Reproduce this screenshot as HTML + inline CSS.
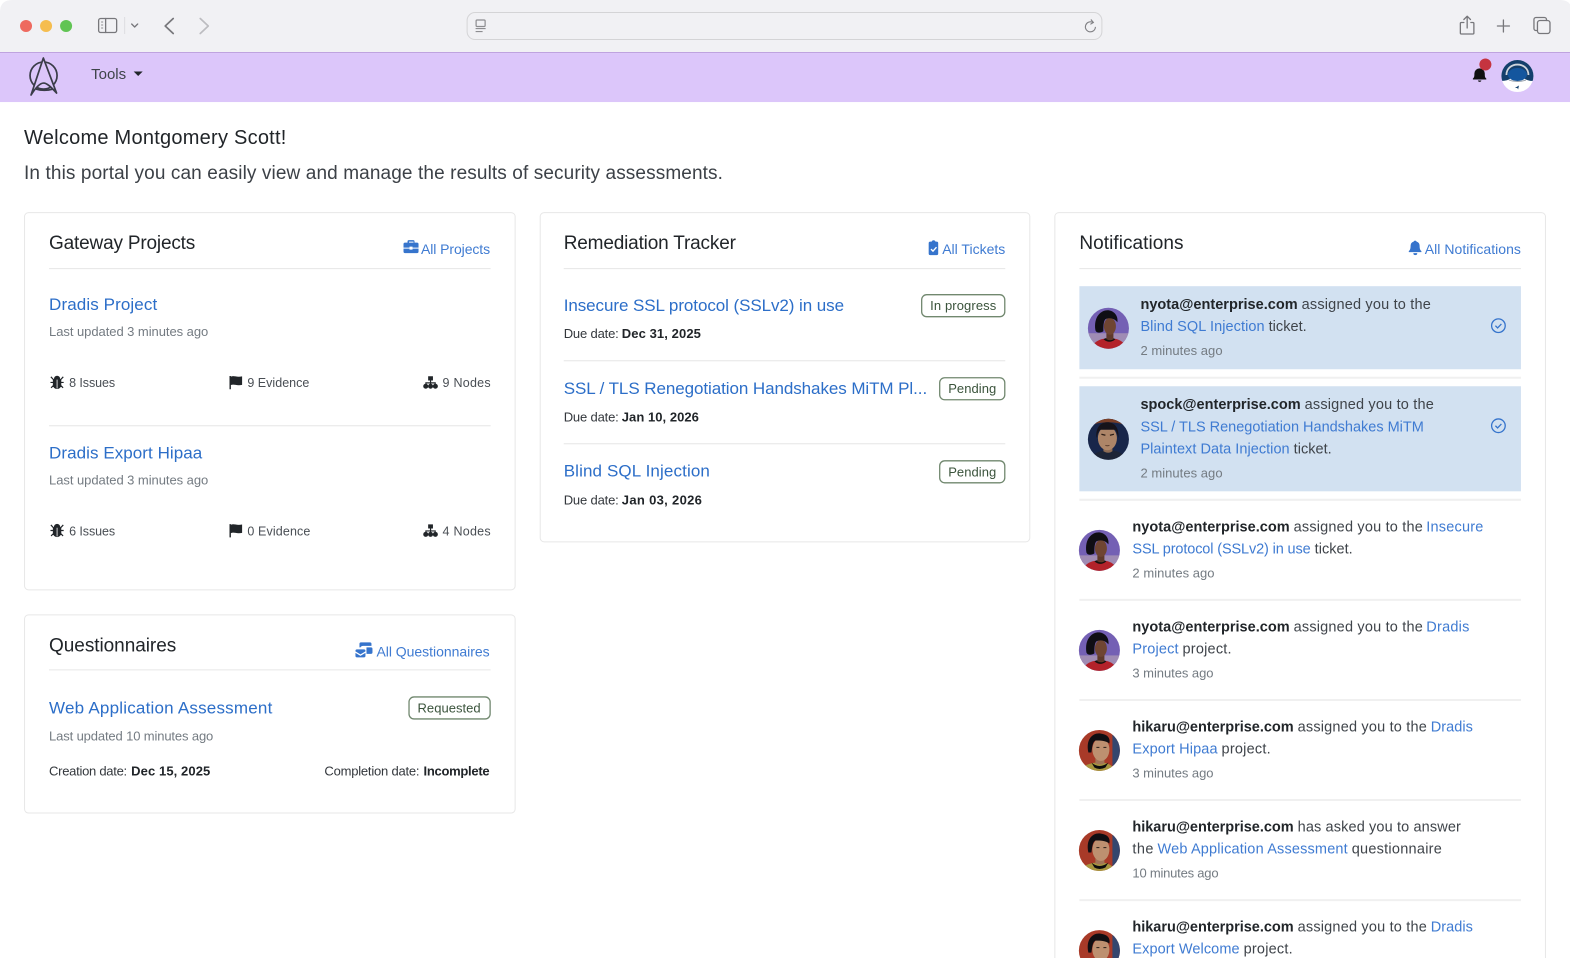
<!DOCTYPE html>
<html lang="en"><head><meta charset="utf-8"><title>Dradis Gateway</title>
<style>
html,body{margin:0;padding:0;width:1570px;height:958px;overflow:hidden;background:#fff}
svg{display:block;position:absolute;left:0;top:0}
text{font-family:"Liberation Sans",sans-serif;white-space:pre}
.h1{font-size:20px;fill:#212529}
.lead{font-size:19px;fill:#3c4147}
.ct{font-size:19px;fill:#212529}
.al{font-size:14px;fill:#3f7bd2}
.tl{font-size:17px;fill:#2c6ec8}
.mu{font-size:13px;fill:#747b82}
.st{font-size:12.5px;fill:#494e54}
.sm{font-size:13px;fill:#33373c}
.b{font-weight:700;fill:#212529}
.bd{font-size:13px;fill:#3a533b}
.n{font-size:14.5px;fill:#3f444a}
.nb{font-size:14.5px;font-weight:700;fill:#212529}
.nl{font-size:14.5px;fill:#3f7bd2}
.tm{font-size:13px;fill:#747b82}
.card{fill:#fff;stroke:#e7e7e7;stroke-width:1}
.hr{stroke:#e6e6e6;stroke-width:1}
.hl{stroke:#f0f0f0;stroke-width:2}
.badge{fill:#fff;stroke:#71886f;stroke-width:1.3}
.ic{fill:#3674cc}
.dk{fill:#212529}
.tb{fill:none;stroke:#77777b;stroke-width:1.3;stroke-linecap:round;stroke-linejoin:round}
</style></head><body>
<svg width="1570" height="958" viewBox="0 0 1568 957.4" preserveAspectRatio="none" xmlns="http://www.w3.org/2000/svg">
<defs>
<clipPath id="c"><circle cx="0" cy="0" r="20.5"/></clipPath>
<clipPath id="p"><circle cx="1515.5" cy="76" r="16"/></clipPath>
<symbol id="ny" overflow="visible"><g clip-path="url(#c)">
<rect x="-21" y="-21" width="42" height="42" fill="#7460b4"/>
<rect x="-21" y="5" width="42" height="16" fill="#a08cb4"/>
<path d="M-17 21C-15 13-8 10 1 10S16 13 18 21Z" fill="#b3222a"/>
<path d="M-5 11Q1 16 7 11L5 10H-3Z" fill="#15110f"/>
<path d="M-2 3h7v8q-3 2-7 0Z" fill="#5f3a2b"/>
<ellipse cx="1.500" cy="-2" rx="6" ry="8.500" fill="#6f4532"/>
<path d="M-13 2C-15-12-7-18-1-18S10-13 9-6C6-10 1-11-3-9-5-7-5-2-5 3-8 5-12 5-13 2Z" fill="#0f0e14"/>
</g></symbol>
<symbol id="sp" overflow="visible"><g clip-path="url(#c)">
<rect x="-21" y="-21" width="42" height="42" fill="#18264a"/>
<path d="M-21-21H21V-13Q0-21-21-13Z" fill="#7a3f28"/>
<path d="M-20 21C-14 13-8 11 0 11S14 13 20 21Z" fill="#1d2436"/>
<path d="M-5 4h9v8q-4 3-9 0Z" fill="#8f6c54"/>
<ellipse cx="-1" cy="-1" rx="9.500" ry="12" fill="#ad8568"/>
<path d="M-12-1C-13-14-6-17-1-17S11-14 10-1C9-5 8-8 7-9.500H-8C-10-8-11-5-12-1Z" fill="#17131a"/>
<path d="M-7-5l4 1M1.500-4l4-1" stroke="#2c1e18" stroke-width="1.300"/>
<path d="M-3 6q2 1 4 0" stroke="#5a3c2c" stroke-width="1" fill="none"/>
</g></symbol>
<symbol id="hi" overflow="visible"><g clip-path="url(#c)">
<rect x="-21" y="-21" width="42" height="42" fill="#a83a28"/>
<rect x="13" y="-21" width="8" height="42" fill="#34466e"/>
<path d="M-19 21C-16 14-8 12 0 12S13 14 16 21Z" fill="#a8973f"/>
<path d="M-8 12Q0 19 9 12L6 17Q0 20-5 17Z" fill="#0e0d0d"/>
<path d="M-4 6h9v7q-4 2-9 0Z" fill="#a27658"/>
<ellipse cx="1.500" cy="-1" rx="8.500" ry="11.500" fill="#bd9070"/>
<path d="M-11 2C-14-12-6-18 1-17S11-13 10-7C6-10 1-10-4-10-7-8-7-4-8 2Z" fill="#100e12"/>
<path d="M-3-3h3M4-3h3" stroke="#3a2a20" stroke-width="1.100"/>
</g></symbol>
<symbol id="bug" overflow="visible"><path d="M-2.500-3.400a2.500 2.500 0 0 1 5 0ZM-3.600-2.600H3.600V2.600A3.600 3.600 0 0 1-3.600 2.600ZM-6.200-5.400-3.600-2.600M6.200-5.400 3.600-2.600M-6.600.2H-3.600M6.600.2H3.600M-6 5.600-3.600 3.200M6 5.600 3.600 3.200" fill="#212529" stroke="#212529" stroke-width="1.200"/><path d="M0-2.600V6.200" stroke="#fff" stroke-width=".8"/></symbol>
<symbol id="flag" overflow="visible"><path d="M-5.800-6.200h1.400V7h-1.400ZM-4.400-5.600C-1-7 1-4.600 6.800-5.800V2.600C1 3.800-1 1.400-4.400 2.800Z" fill="#212529"/></symbol>
<symbol id="node" overflow="visible"><path d="M-2.400-6h4.800v4.200h-4.800ZM-.6-1.800H.6V0H5.200V2H4V1.200H.6V2H-.6V1.200H-4V2H-5.200V0H-.6Z" fill="#212529"/><circle cx="-4.800" cy="4" r="2.500" fill="#212529"/><circle cx="0" cy="4" r="2.500" fill="#212529"/><circle cx="4.800" cy="4" r="2.500" fill="#212529"/></symbol>
</defs>

<!-- Browser chrome -->
<rect width="1570" height="52" fill="#f1f1f4"/>
<path d="M0 0H12Q0 0 0 12ZM1570 0H1558Q1570 0 1570 12Z" fill="#fff"/>
<rect y="52" width="1570" height="1" fill="#bda0de"/>
<circle cx="26" cy="26" r="6" fill="#ee6a5f"/><circle cx="46" cy="26" r="6" fill="#f5bd4f"/><circle cx="66" cy="26" r="6" fill="#61c454"/>
<rect x="98.500" y="18.500" width="18" height="14" rx="2" class="tb"/><path d="M105.500 18.500v14" class="tb"/><path d="M101 22h2M101 25h2M101 28h2" stroke="#8a8a8e" stroke-width="1"/>
<path d="M124.500 17v17" stroke="#dcdce0"/>
<path d="M131.500 24l3 3 3-3" class="tb"/>
<path d="M173 18.500l-8 7.500 8 7.500" class="tb" style="stroke-width:1.700"/>
<path d="M200 18.500l8 7.500-8 7.500" fill="none" stroke="#bcbcc0" stroke-width="1.700" stroke-linecap="round" stroke-linejoin="round"/>
<rect x="466.500" y="12.500" width="634" height="27" rx="8" fill="#f1f1f4" stroke="#d4d4d6"/>
<rect x="475.500" y="20" width="9" height="6.500" rx="1" fill="none" stroke="#8d8d90" stroke-width="1.200"/><path d="M475 28.500h10M475 31.500h7" stroke="#8d8d90" stroke-width="1.100"/>
<path d="M1091.500 22.500a5 5 0 1 0 2.500 4.300" fill="none" stroke="#808084" stroke-width="1.100"/><path d="M1089.500 19.500l2.500 3-3 1.800" fill="none" stroke="#808084" stroke-width="1.100"/>
<path d="M1462 22.500h-2.500a1 1 0 0 0-1 1V33a1 1 0 0 0 1 1h11.500a1 1 0 0 0 1-1V23.500a1 1 0 0 0-1-1H1469M1465.300 28V16.500M1462 19.500l3.300-3.300 3.300 3.300" class="tb"/>
<path d="M1501.500 20v12M1495.500 26h12" class="tb"/>
<path d="M1534.500 30.500h-.5a2 2 0 0 1-2-2v-9a2 2 0 0 1 2-2h8.500a2 2 0 0 1 2 2v1" class="tb"/><rect x="1535.500" y="20.500" width="12.500" height="13" rx="2.500" class="tb"/>

<!-- Nav -->
<rect y="53" width="1570" height="49" fill="#dcc6fa"/>
<g fill="none" stroke="#3a3c48" stroke-width="1.700" stroke-linejoin="round">
<circle cx="43.500" cy="75.500" r="13.500"/>
<path d="M43.300 58L31 95 C36 87 40 83 43.500 83 C47 83 51 87 56.500 93Z" fill="#dcc6fa"/>
<path d="M36 89Q44 91.500 53 89"/>
</g>
<text x="91" y="79" class="sm" style="font-size:15px;fill:#3f444a" textLength="35">Tools</text>
<path d="M133.500 71.500h9l-4.500 4.500Z" fill="#212529"/>
<path d="M1471 78.500c1.500-1 1.500-2.500 1.500-5a5.200 5.200 0 0 1 10.400 0c0 2.500 0 4 1.500 5v1h-13.400Z" fill="#111"/><path d="M1476 80.500h3.500a1.800 1.800 0 0 1-3.500 0Z" fill="#111"/>
<circle cx="1483.500" cy="64.500" r="6" fill="#c5343f"/>
<circle cx="1515.500" cy="76" r="16" fill="#fff"/>
<g clip-path="url(#p)"><path d="M1499 59H1532V81Q1525 81 1522 78H1509Q1506 81 1499 81Z" fill="#143f6c"/>
<path d="M1504.500 75c0-14 22-14 22 0" fill="none" stroke="#cfd5dc" stroke-width="1.800"/>
<ellipse cx="1515.500" cy="74.500" rx="9.500" ry="6.500" fill="#14569e"/>
<path d="M1507 80q8.500 3 17 0" fill="none" stroke="#9aa3ad" stroke-width="1"/>
<path d="M1513 88l4-2.500-.8 4-.8-1.500Z" fill="#143f6c"/></g>

<!-- Welcome -->
<text x="24" y="144" class="h1" textLength="262">Welcome Montgomery Scott!</text>
<text x="24" y="179" class="lead" textLength="698">In this portal you can easily view and manage the results of security assessments.</text>

<!-- Gateway Projects -->
<rect x="24.500" y="212.500" width="490" height="377" rx="4" class="card"/>
<text x="49" y="249" class="ct" textLength="146">Gateway Projects</text>
<path d="M403 244a1.500 1.500 0 0 1 1.500-1.500h2.500v-1.200a1.300 1.300 0 0 1 1.300-1.300h4.400a1.300 1.300 0 0 1 1.300 1.300v1.200h2.500a1.500 1.500 0 0 1 1.500 1.500v3.500h-6v-1h-3v1h-6ZM408.500 242.500h4.500v-1h-4.500ZM403 248.500h6v1h3v-1h6v3a1.500 1.500 0 0 1-1.500 1.500h-12a1.500 1.500 0 0 1-1.500-1.500Z" class="ic"/>
<text x="420.500" y="254" class="al" textLength="69">All Projects</text>
<path d="M49 268.500H490" class="hr"/>
<text x="49" y="310" class="tl" textLength="108">Dradis Project</text>
<text x="49" y="336" class="mu" textLength="159">Last updated 3 minutes ago</text>
<use href="#bug" x="57" y="382"/><text x="69" y="387" class="st" textLength="46">8 Issues</text>
<use href="#flag" x="235" y="382"/><text x="247" y="387" class="st" textLength="62">9 Evidence</text>
<use href="#node" x="430" y="382"/><text x="442" y="387" class="st" textLength="48">9 Nodes</text>
<path d="M49 425.500H490" class="hr"/>
<text x="49" y="458" class="tl" textLength="153">Dradis Export Hipaa</text>
<text x="49" y="484" class="mu" textLength="159">Last updated 3 minutes ago</text>
<use href="#bug" x="57" y="530"/><text x="69" y="535" class="st" textLength="46">6 Issues</text>
<use href="#flag" x="235" y="530"/><text x="247" y="535" class="st" textLength="63">0 Evidence</text>
<use href="#node" x="430" y="530"/><text x="442" y="535" class="st" textLength="48">4 Nodes</text>

<!-- Questionnaires -->
<rect x="24.500" y="614.500" width="490" height="198" rx="4" class="card"/>
<text x="49" y="651" class="ct" textLength="127">Questionnaires</text>
<path d="M359 643.500a1.500 1.500 0 0 1 1.500-1.500h9a1.500 1.500 0 0 1 1.500 1.500v2h-8a3 3 0 0 0-3 1.500h-1ZM366 647h4.500a1.500 1.500 0 0 1 1.500 1.500v3.500a1.500 1.500 0 0 1-1.500 1.500H366ZM355 650.500a1.500 1.500 0 0 1 1.500-1.500h7a1.500 1.500 0 0 1 1.500 1.500v.5l-5 3-5-3ZM355 652.500l5 3 5-3v3a1.500 1.500 0 0 1-1.500 1.500h-7a1.500 1.500 0 0 1-1.500-1.500Z" class="ic"/>
<text x="376" y="656" class="al" textLength="113">All Questionnaires</text>
<path d="M49 669.500H490" class="hr"/>
<text x="49" y="713" class="tl" textLength="223">Web Application Assessment</text>
<rect x="408.500" y="696.500" width="81" height="22" rx="5" class="badge"/>
<text x="417" y="712" class="bd" textLength="63">Requested</text>
<text x="49" y="740" class="mu" textLength="164">Last updated 10 minutes ago</text>
<text x="49" y="775" class="sm" textLength="78">Creation date:</text><text x="131" y="775" class="sm b" textLength="79">Dec 15, 2025</text>
<text x="324" y="775" class="sm" textLength="95">Completion date:</text><text x="423" y="775" class="sm b" textLength="66">Incomplete</text>

<!-- Remediation Tracker -->
<rect x="539.500" y="212.500" width="489" height="329" rx="4" class="card"/>
<text x="563" y="249" class="ct" textLength="172">Remediation Tracker</text>
<path d="M927.500 243a1.500 1.500 0 0 1 1.500-1.500h1.500a2 2 0 0 1 3.800 0h1.200a1.500 1.500 0 0 1 1.500 1.500v10.500a1.500 1.500 0 0 1-1.500 1.500H929a1.500 1.500 0 0 1-1.500-1.500Z" class="ic"/><path d="M929.800 249l2 2 3.500-4" fill="none" stroke="#fff" stroke-width="1.400"/>
<text x="941" y="254" class="al" textLength="63">All Tickets</text>
<path d="M563 268.500H1004" class="hr"/>
<text x="563" y="311" class="tl" textLength="280">Insecure SSL protocol (SSLv2) in use</text>
<rect x="920.500" y="294.500" width="83" height="22" rx="5" class="badge"/>
<text x="929" y="310" class="bd" textLength="66">In progress</text>
<text x="563" y="338" class="sm" textLength="55">Due date:</text><text x="621" y="338" class="sm b" textLength="79">Dec 31, 2025</text>
<path d="M563 360.500H1004" class="hr"/>
<text x="563" y="394" class="tl" textLength="363">SSL / TLS Renegotiation Handshakes MiTM Pl...</text>
<rect x="938.500" y="377.500" width="65" height="22" rx="5" class="badge"/>
<text x="947" y="393" class="bd" textLength="48">Pending</text>
<text x="563" y="421" class="sm" textLength="55">Due date:</text><text x="621" y="421" class="sm b" textLength="77">Jan 10, 2026</text>
<path d="M563 443.500H1004" class="hr"/>
<text x="563" y="476" class="tl" textLength="146">Blind SQL Injection</text>
<rect x="938.500" y="460.500" width="65" height="22" rx="5" class="badge"/>
<text x="947" y="476" class="bd" textLength="48">Pending</text>
<text x="563" y="504" class="sm" textLength="55">Due date:</text><text x="621" y="504" class="sm b" textLength="80">Jan 03, 2026</text>

<!-- Notifications -->
<path d="M1053.500 960V216.500a4 4 0 0 1 4-4H1539.500a4 4 0 0 1 4 4V960" class="card"/>
<text x="1078" y="249" class="ct" textLength="104">Notifications</text>
<path d="M1407 251c1.500-1.200 1.800-3 1.800-5.500a4.200 4.200 0 0 1 3-4 1.600 1.600 0 0 1 3 0 4.200 4.200 0 0 1 3 4c0 2.500.3 4.300 1.800 5.500v1h-12.600ZM1411.500 253h4a2 2 0 0 1-4 0Z" class="ic"/>
<text x="1423" y="254" class="al" textLength="96">All Notifications</text>
<path d="M1078 268.500H1519" class="hr"/>

<rect x="1078" y="286" width="441" height="83" fill="#d2e1f1"/>
<use href="#ny" x="1107" y="328"/>
<text x="1139" y="309" class="nb" textLength="157">nyota@enterprise.com</text><text x="1300" y="309" class="n" textLength="129">assigned you to the</text>
<text x="1139" y="331" class="nl" textLength="124">Blind SQL Injection</text><text x="1267" y="331" class="n" textLength="38">ticket.</text>
<text x="1139" y="355" class="tm" textLength="82">2 minutes ago</text>
<circle cx="1496.500" cy="325.500" r="6.800" fill="none" stroke="#3674cc" stroke-width="1.300"/><path d="M1493.500 325.500l2.200 2.200 3.800-4" fill="none" stroke="#3674cc" stroke-width="1.300"/>
<path d="M1078 377.500H1519" class="hl"/>

<rect x="1078" y="386" width="441" height="105" fill="#d2e1f1"/>
<use href="#sp" x="1107" y="439"/>
<text x="1139" y="409" class="nb" textLength="160">spock@enterprise.com</text><text x="1303" y="409" class="n" textLength="129">assigned you to the</text>
<text x="1139" y="431" class="nl" textLength="283">SSL / TLS Renegotiation Handshakes MiTM</text>
<text x="1139" y="453" class="nl" textLength="149">Plaintext Data Injection</text><text x="1292" y="453" class="n" textLength="38">ticket.</text>
<text x="1139" y="477" class="tm" textLength="82">2 minutes ago</text>
<circle cx="1496.500" cy="425.500" r="6.800" fill="none" stroke="#3674cc" stroke-width="1.300"/><path d="M1493.500 425.500l2.200 2.200 3.800-4" fill="none" stroke="#3674cc" stroke-width="1.300"/>
<path d="M1078 499.500H1519" class="hl"/>

<use href="#ny" x="1098" y="550"/>
<text x="1131" y="531" class="nb" textLength="157">nyota@enterprise.com</text><text x="1292" y="531" class="n" textLength="129">assigned you to the</text><text x="1424.500" y="531" class="nl" textLength="57">Insecure</text>
<text x="1131" y="553" class="nl" textLength="178">SSL protocol (SSLv2) in use</text><text x="1313" y="553" class="n" textLength="38">ticket.</text>
<text x="1131" y="577" class="tm" textLength="82">2 minutes ago</text>
<path d="M1078 599.500H1519" class="hl"/>

<use href="#ny" x="1098" y="650"/>
<text x="1131" y="631" class="nb" textLength="157">nyota@enterprise.com</text><text x="1292" y="631" class="n" textLength="129">assigned you to the</text><text x="1424.500" y="631" class="nl" textLength="43">Dradis</text>
<text x="1131" y="653" class="nl" textLength="46">Project</text><text x="1181" y="653" class="n" textLength="49">project.</text>
<text x="1131" y="677" class="tm" textLength="81">3 minutes ago</text>
<path d="M1078 699.500H1519" class="hl"/>

<use href="#hi" x="1098" y="750"/>
<text x="1131" y="731" class="nb" textLength="161">hikaru@enterprise.com</text><text x="1296" y="731" class="n" textLength="129">assigned you to the</text><text x="1429" y="731" class="nl" textLength="42">Dradis</text>
<text x="1131" y="753" class="nl" textLength="85">Export Hipaa</text><text x="1220" y="753" class="n" textLength="49">project.</text>
<text x="1131" y="777" class="tm" textLength="81">3 minutes ago</text>
<path d="M1078 799.500H1519" class="hl"/>

<use href="#hi" x="1098" y="850"/>
<text x="1131" y="831" class="nb" textLength="161">hikaru@enterprise.com</text><text x="1296" y="831" class="n" textLength="163">has asked you to answer</text>
<text x="1131" y="853" class="n" textLength="21">the</text><text x="1156" y="853" class="nl" textLength="190">Web Application Assessment</text><text x="1350" y="853" class="n" textLength="90">questionnaire</text>
<text x="1131" y="877" class="tm" textLength="86">10 minutes ago</text>
<path d="M1078 899.500H1519" class="hl"/>

<use href="#hi" x="1098" y="950"/>
<text x="1131" y="931" class="nb" textLength="161">hikaru@enterprise.com</text><text x="1296" y="931" class="n" textLength="129">assigned you to the</text><text x="1429" y="931" class="nl" textLength="42">Dradis</text>
<text x="1131" y="953" class="nl" textLength="107">Export Welcome</text><text x="1242" y="953" class="n" textLength="49">project.</text>
</svg>
</body></html>
